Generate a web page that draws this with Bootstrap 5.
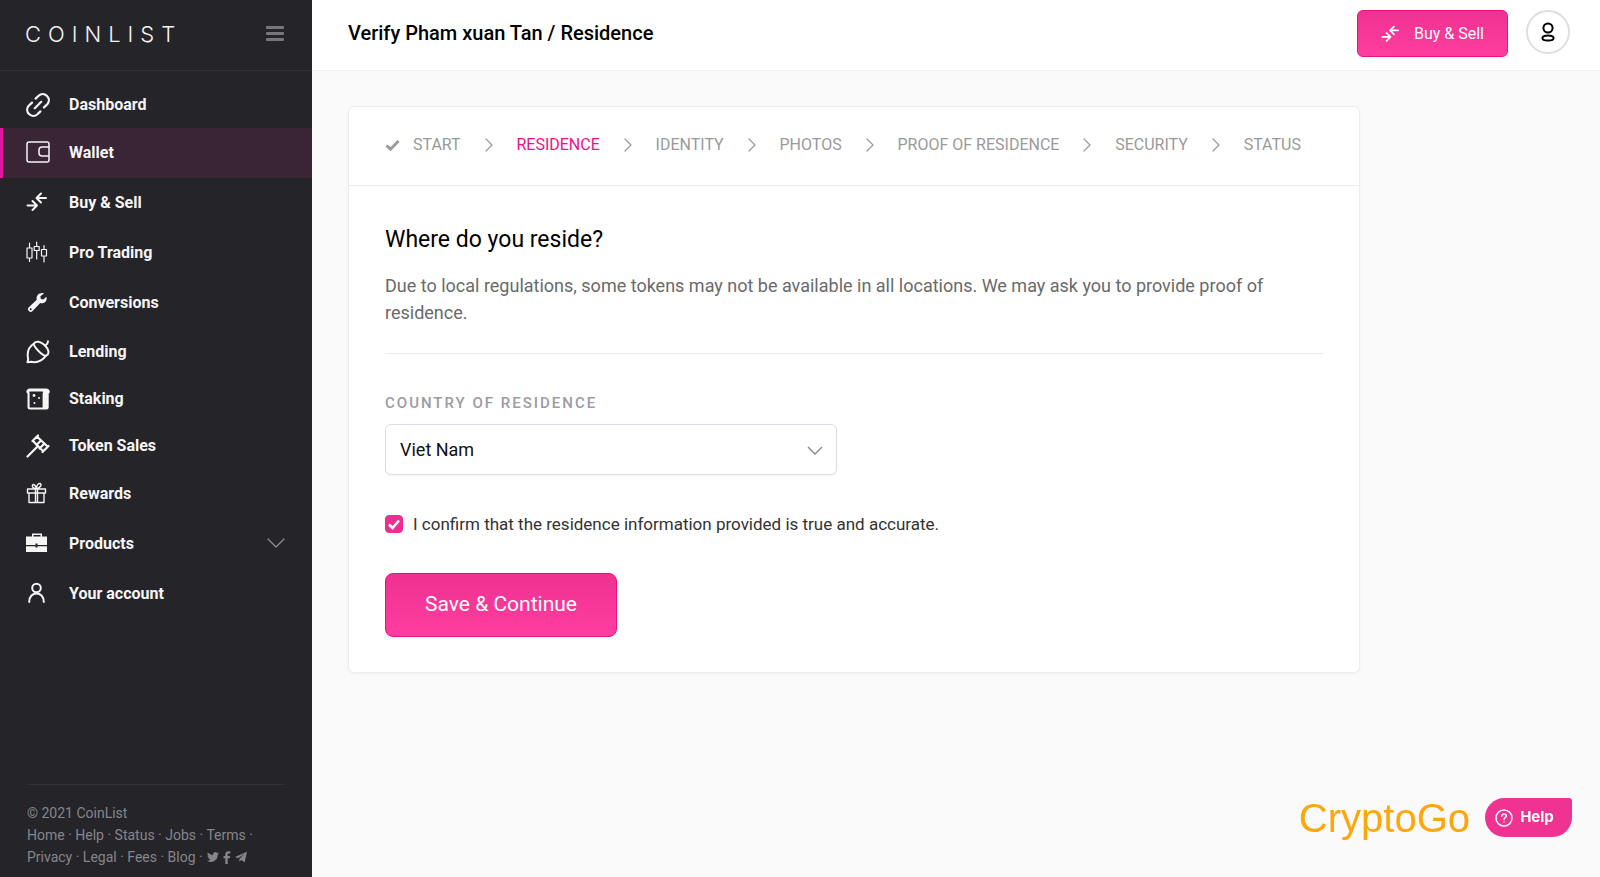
<!DOCTYPE html>
<html lang="en">
<head>
<meta charset="utf-8">
<meta name="viewport" content="width=device-width, initial-scale=1">
<title>Verify / Residence - CoinList</title>
<link href="https://cdn.jsdelivr.net/npm/bootstrap@5.3.0/dist/css/bootstrap.min.css" rel="stylesheet">
<style>
  body { font-family: Roboto, "Liberation Sans", sans-serif; background: #fafafa; color: #000; }
  svg { display: block; flex: none; }
  .line-icon { fill: none; stroke: currentColor; stroke-width: 2; stroke-linecap: round; stroke-linejoin: round; }

  .sidebar { width: 312px; background: #252429; }
  .sidebar-head { height: 71px; padding: 0 28px 2px 25px; border-bottom: 1px solid #323236; }
  .wordmark { font-family: Inter, sans-serif; font-weight: 300; font-size: 22px; letter-spacing: 7px; color: #f4f4f4; text-decoration: none; }
  .menu-toggle { color: #77777a; }
  .side-nav { padding-top: 10px; }
  .side-link { height: 50px; padding: 0 27px 0 23px; gap: 19px; border-left: 3px solid transparent; color: #f5f5f6; font-size: 16px; font-weight: 700; text-decoration: none; }
  .side-link.short { height: 47px; }
  .side-link.current { background: #392535; border-color: #e316a4; }
  .side-foot { margin: 0 27px; padding: 17px 0 9px; border-top: 1px solid #333332; font-size: 14px; line-height: 22px; color: #85858a; }
  .side-foot a { color: inherit; text-decoration: none; }

  .topbar { height: 71px; padding: 10px 30px 0 36px; border-bottom: 1px solid #f0f0f2; }
  .page-title { font-size: 20px; line-height: 46px; font-weight: 500; }
  .top-actions { gap: 18px; }
  .btn-pink { --bs-btn-color: #fff; --bs-btn-hover-color: #fff; --bs-btn-active-color: #fff; --bs-btn-border-color: #ee0b86; --bs-btn-hover-border-color: #ee0b86; background: linear-gradient(#ef3191, #ff3ea0); }
  .btn-trade { width: 151px; height: 47px; font-size: 16px; gap: 14px; border-radius: 6px; }
  .avatar { width: 44px; height: 44px; border: 2px solid #dedede; background: #fff; }

  .content { padding: 35px 36px; }
  .form-card { max-width: 1012px; border: 1px solid #ececf2; border-radius: 6px; box-shadow: 0 1px 3px #0000000a; }
  .steps { height: 79px; padding: 0 58px 2px 36px; border-bottom: 1px solid #ececf0; font-size: 16px; color: #9a9a9a; }
  .steps a { color: inherit; text-decoration: none; }
  .steps a.done { gap: 13px; }
  .steps a.now { color: #f0108a; }
  .card-main { padding: 37px 35px 35px 36px; }
  .card-main h2 { font-size: 23px; line-height: 34px; font-weight: 400; margin-bottom: 15px; }
  .intro { font-size: 18px; line-height: 27px; color: #6a6a6a; padding-bottom: 27px; margin-bottom: 38px; border-bottom: 1px solid #ececf2; }
  .field-row { --bs-gutter-x: 36px; }
  .field-label { font-size: 15px; line-height: 22px; font-weight: 500; letter-spacing: 2px; color: #9c9ca2; margin-bottom: 10px; }
  .country { height: 51px; padding: 0 36px 0 14px; font-size: 18px; color: #111; border-color: #dcdce6; border-radius: 6px; box-shadow: 0 1px 2px #0000000d; background-position: right 13px center;
    background-size: 16px 16px; background-image: url("data:image/svg+xml,%3csvg xmlns='http://www.w3.org/2000/svg' viewBox='0 0 16 16'%3e%3cpath d='M1 5l7 7 7-7' fill='none' stroke='%23888' stroke-width='1.4'/%3e%3c/svg%3e"); }
  .confirm { margin: 37px 0; gap: 10px; font-size: 17px; line-height: 24px; color: #333; }
  .confirm .form-check-input { width: 18px; height: 18px; border-radius: 4px; }
  .confirm .form-check-input:checked { background-color: #ee2d90; border-color: #ee2d90;
    background-image: url("data:image/svg+xml,%3csvg xmlns='http://www.w3.org/2000/svg' viewBox='0 0 16 16'%3e%3cpath d='M3 8.500l3.500 3.500L13 4.500' fill='none' stroke='white' stroke-width='2.600'/%3e%3c/svg%3e"); }
  .btn-save { width: 232px; height: 64px; font-size: 21px; border-radius: 8px; }

  .corner { right: 28px; bottom: 38px; gap: 15px; }
  .brand-tag { font-family: "Liberation Sans", sans-serif; font-size: 40px; line-height: 41px; color: #ffa60a; }
  .btn-help { width: 87px; height: 39px; padding: 0 8px 0 0; border: 0; border-radius: 20px 3px 20px 20px; background: #f03392; color: #fff; font-family: Inter, sans-serif; font-size: 15px; font-weight: 700; gap: 7px; }
</style>
</head>
<body>
<div class="d-flex min-vh-100">
  <aside class="sidebar d-flex flex-column flex-shrink-0">
    <div class="sidebar-head d-flex align-items-center justify-content-between">
      <a class="wordmark" href="#">COINLIST</a>
      <button class="menu-toggle btn p-0 border-0" type="button" aria-label="Menu">
        <svg width="18" height="16" viewBox="0 0 18 16" fill="currentColor"><rect width="18" height="3" rx="1"/><rect y="6" width="18" height="3" rx="1"/><rect y="12" width="18" height="3" rx="1"/></svg>
      </button>
    </div>
    <nav class="side-nav">
      <a class="side-link short d-flex align-items-center" href="#">
        <svg class="line-icon" width="24" height="24" viewBox="0 0 24 24"><path style="stroke-width:2.200" d="M9.600 5.600L12.600 2.700C15 .5 18.600.6 21 3S23.400 8.800 21.300 11.200L18 14.400M14.400 18.400L11.400 21.300C9 23.500 5.400 23.400 3 21S.6 15.200 2.700 12.800L6 9.600M8.800 15.200l6.400-6.400"/></svg>Dashboard</a>
      <a class="side-link current d-flex align-items-center" href="#" aria-current="page">
        <svg class="line-icon" width="24" height="24" viewBox="0 0 24 24"><path style="stroke-width:1.500" d="M3 1h18q2 0 2 2v16q0 2-2 2H3q-2 0-2-2V3q0-2 2-2zM23 6h-7q-3 0-3 3v3q0 3 3 3h7"/></svg>Wallet</a>
      <a class="side-link d-flex align-items-center" href="#">
        <svg class="line-icon" width="24" height="24" viewBox="0 0 24 24"><path d="M1.500 14.500H11M6.500 10l4.500 4.500L6.500 19M20 7H10.500M15 2.500L10.500 7l4.500 4.500"/></svg>Buy &amp; Sell</a>
      <a class="side-link d-flex align-items-center" href="#">
        <svg class="line-icon" width="24" height="24" viewBox="0 0 24 24"><path style="stroke-width:1.200" d="M1 7h5v10H1zM3.500 7V2M3.500 17v3.500M8.200 5.500h5v4h-5zM10.700 5.500V1M10.700 9.500v8.500M15.500 8.500h5v6.500h-5zM18 8.500v-4M18 15v6"/></svg>Pro Trading</a>
      <a class="side-link d-flex align-items-center" href="#">
        <svg width="24" height="24" viewBox="0 0 24 24" fill="currentColor"><path fill-rule="evenodd" d="M18 2.200c-4-1.200-8.600 1.800-7.200 6.600l-8 7.500a2.600 2.600 0 0 0 3.800 3.700l7.600-7.900c4 1.100 7.500-2.300 6.200-6.400l-3.100 2.900-2.400-.7-.6-2.500zM4.700 17.200a1 1 0 1 0 0 2 1 1 0 0 0 0-2z"/></svg>Conversions</a>
      <a class="side-link short d-flex align-items-center" href="#">
        <svg class="line-icon" width="24" height="24" viewBox="0 0 24 24"><path d="M8.200 3.200C10 .8 14.500 1 18.500 5s5.500 8.500 2 10.500C18.500 16.500 16 14.500 12.500 11S7 5 8.200 3.200zM8 3.500C2.500 7 .8 13 2.200 19L1.500 22.200 5 21.800C11 23 16.500 20.500 20 15.600M20 5c1.200-1 1.900-2.200 2-3.800"/></svg>Lending</a>
      <a class="side-link short d-flex align-items-center" href="#">
        <svg width="24" height="24" viewBox="0 0 24 24" fill="currentColor"><path fill-rule="evenodd" d="M4 1.500h16c3.500 0 5 3.500 2.700 5.300V20q0 2.500-2.500 2.500H4Q1.500 22.500 1.500 20V6.800C-.8 5 .5 1.500 4 1.500zM4 4.500c-1.200.2-.6 1.500-.4 1.500v14.500h13V6c.8-.6.6-1.300-.2-1.500z"/><circle cx="8" cy="8.500" r="1.400"/><circle cx="13" cy="11" r="1"/><circle cx="8.500" cy="16" r="1"/></svg>Staking</a>
      <a class="side-link short d-flex align-items-center" href="#">
        <svg class="line-icon" width="24" height="24" viewBox="0 0 24 24"><path style="stroke-width:2.200" d="M1.500 22.500L11 13M12 1.500L6.500 7M22.500 12L16.500 18M11.500 3l10 9.500M7 7l10 10M15 6.500L10.500 11M18 10l-4.500 4.500"/></svg>Token Sales</a>
      <a class="side-link d-flex align-items-center" href="#">
        <svg class="line-icon" width="24" height="24" viewBox="0 0 24 24"><path style="stroke-width:1.400" d="M1.500 7h18v4h-18zM3 11v9.500h15V11M9.500 7v13.500M11.500 7v13.500M10.500 7C8 6.500 5.500 5 6.500 3.200S10 3.500 10.500 7c0-3.500 1.500-6 3.500-5.500s1.200 4-3.500 5.500"/></svg>Rewards</a>
      <a class="side-link d-flex align-items-center" href="#">
        <svg width="24" height="24" viewBox="0 0 24 24" fill="currentColor"><path fill-rule="evenodd" d="M0 4.500h6V1.500h10v3h5V13h-9.500v-1.500h-2V13H0zM7.500 4.500h7V3h-7zM0 14.300h9.500v1.200h2v-1.200H21V20H0z"/></svg>Products
        <svg class="line-icon ms-auto opacity-50" width="18" height="12" viewBox="0 0 18 12"><path style="stroke-width:1.300" d="M1 1l8 8 8-8"/></svg></a>
      <a class="side-link d-flex align-items-center" href="#">
        <svg class="line-icon" width="24" height="24" viewBox="0 0 24 24"><circle cx="10.500" cy="6" r="4.300"/><path d="M3.200 20c0-11.500 14.600-11.500 14.600 0"/></svg>Your account</a>
    </nav>
    <footer class="side-foot mt-auto">
      <div>© 2021 CoinList</div>
      <div><a href="#">Home</a> · <a href="#">Help</a> · <a href="#">Status</a> · <a href="#">Jobs</a> · <a href="#">Terms</a> ·</div>
      <div class="d-flex align-items-center gap-1"><span><a href="#">Privacy</a> · <a href="#">Legal</a> · <a href="#">Fees</a> · <a href="#">Blog</a> ·</span>
        <a href="#" aria-label="Twitter"><svg width="12" height="12" viewBox="0 0 24 24" fill="currentColor"><path d="M24 4.600a10 10 0 0 1-2.800.8 5 5 0 0 0 2.100-2.700 10 10 0 0 1-3.100 1.200 4.900 4.900 0 0 0-8.400 4.500A14 14 0 0 1 1.700 3.200a4.900 4.900 0 0 0 1.500 6.500 5 5 0 0 1-2.200-.6 4.900 4.900 0 0 0 3.900 4.900 5 5 0 0 1-2.200.1 4.900 4.900 0 0 0 4.600 3.400A10 10 0 0 1 0 19.500a14 14 0 0 0 21.500-12.400A10 10 0 0 0 24 4.600z"/></svg></a>
        <a href="#" aria-label="Facebook"><svg width="8" height="13" viewBox="0 0 8 13" fill="currentColor"><path d="M2.300 13V7.300H.5V5h1.800V3.500C2.300 1.300 3.500.2 5.500.2h1.800v2.200H6C5 2.400 4.700 2.900 4.700 3.700V5h2.500l-.4 2.300H4.700V13z"/></svg></a>
        <a href="#" aria-label="Telegram"><svg width="12" height="12" viewBox="0 0 12 12" fill="currentColor"><path d="M12 .8L0 6l3 1.300L9.500 3 4.400 7.900v3l1.700-2 3.600 2.300z"/></svg></a>
      </div>
    </footer>
  </aside>

  <div class="flex-grow-1">
    <header class="topbar bg-white d-flex align-items-start justify-content-between">
      <h1 class="page-title mb-0">Verify Pham xuan Tan / Residence</h1>
      <div class="top-actions d-flex">
        <button class="btn btn-pink btn-trade d-flex align-items-center justify-content-center p-0" type="button">
          <svg class="line-icon" width="19" height="19" viewBox="0 0 22 21"><path d="M1.500 14.500H11M6.500 10l4.500 4.500L6.500 19M20 7H10.500M15 2.500L10.500 7l4.500 4.500"/></svg>Buy &amp; Sell</button>
        <button class="avatar rounded-circle d-flex align-items-center justify-content-center p-0" type="button" aria-label="Profile">
          <svg class="line-icon" width="14" height="20" viewBox="0 0 14 20"><circle cx="7" cy="6" r="4.600"/><ellipse cx="7" cy="16" rx="5.600" ry="2.600"/></svg></button>
      </div>
    </header>

    <main class="content">
      <section class="form-card bg-white">
        <nav class="steps d-flex align-items-center justify-content-between" aria-label="Verification steps">
          <a class="done d-flex align-items-center" href="#"><svg width="15" height="14" viewBox="0 0 15 14"><path d="M1.500 7.500l4 3.700L13.500 3" fill="none" stroke="currentColor" stroke-width="3"/></svg>START</a>
          <svg class="line-icon" width="8" height="14" viewBox="0 0 8 14"><path style="stroke-width:1.200" d="M1 1l6 6-6 6"/></svg>
          <a class="now" href="#" aria-current="step">RESIDENCE</a>
          <svg class="line-icon" width="8" height="14" viewBox="0 0 8 14"><path style="stroke-width:1.200" d="M1 1l6 6-6 6"/></svg>
          <a href="#">IDENTITY</a>
          <svg class="line-icon" width="8" height="14" viewBox="0 0 8 14"><path style="stroke-width:1.200" d="M1 1l6 6-6 6"/></svg>
          <a href="#">PHOTOS</a>
          <svg class="line-icon" width="8" height="14" viewBox="0 0 8 14"><path style="stroke-width:1.200" d="M1 1l6 6-6 6"/></svg>
          <a href="#">PROOF OF RESIDENCE</a>
          <svg class="line-icon" width="8" height="14" viewBox="0 0 8 14"><path style="stroke-width:1.200" d="M1 1l6 6-6 6"/></svg>
          <a href="#">SECURITY</a>
          <svg class="line-icon" width="8" height="14" viewBox="0 0 8 14"><path style="stroke-width:1.200" d="M1 1l6 6-6 6"/></svg>
          <a href="#">STATUS</a>
        </nav>
        <form class="card-main">
          <h2>Where do you reside?</h2>
          <p class="intro">Due to local regulations, some tokens may not be available in all locations. We may ask you to provide proof of residence.</p>
          <div class="row field-row">
            <div class="col-6">
              <label class="field-label d-block" for="country">COUNTRY OF RESIDENCE</label>
              <select class="form-select country" id="country"><option selected>Viet Nam</option></select>
            </div>
          </div>
          <div class="confirm d-flex align-items-center">
            <input class="form-check-input m-0" type="checkbox" id="confirm" checked>
            <label for="confirm">I confirm that the residence information provided is true and accurate.</label>
          </div>
          <button class="btn btn-pink btn-save p-0" type="submit">Save &amp; Continue</button>
        </form>
      </section>
    </main>
  </div>
</div>

<div class="corner position-fixed d-flex align-items-start">
  <span class="brand-tag">CryptoGo</span>
  <button class="btn-help d-flex align-items-center justify-content-center" type="button">
    <svg class="line-icon" width="18" height="18" viewBox="0 0 18 18"><g style="stroke-width:1.500"><circle cx="9" cy="9" r="8"/><path d="M6.800 7.200C6.800 4.200 11.300 4.400 11.300 7c0 1.600-2.300 1.700-2.300 3.400M9 13v.1"/></g></svg>Help</button>
</div>
<script src="https://cdn.jsdelivr.net/npm/bootstrap@5.3.0/dist/js/bootstrap.bundle.min.js"></script>
</body>
</html>
